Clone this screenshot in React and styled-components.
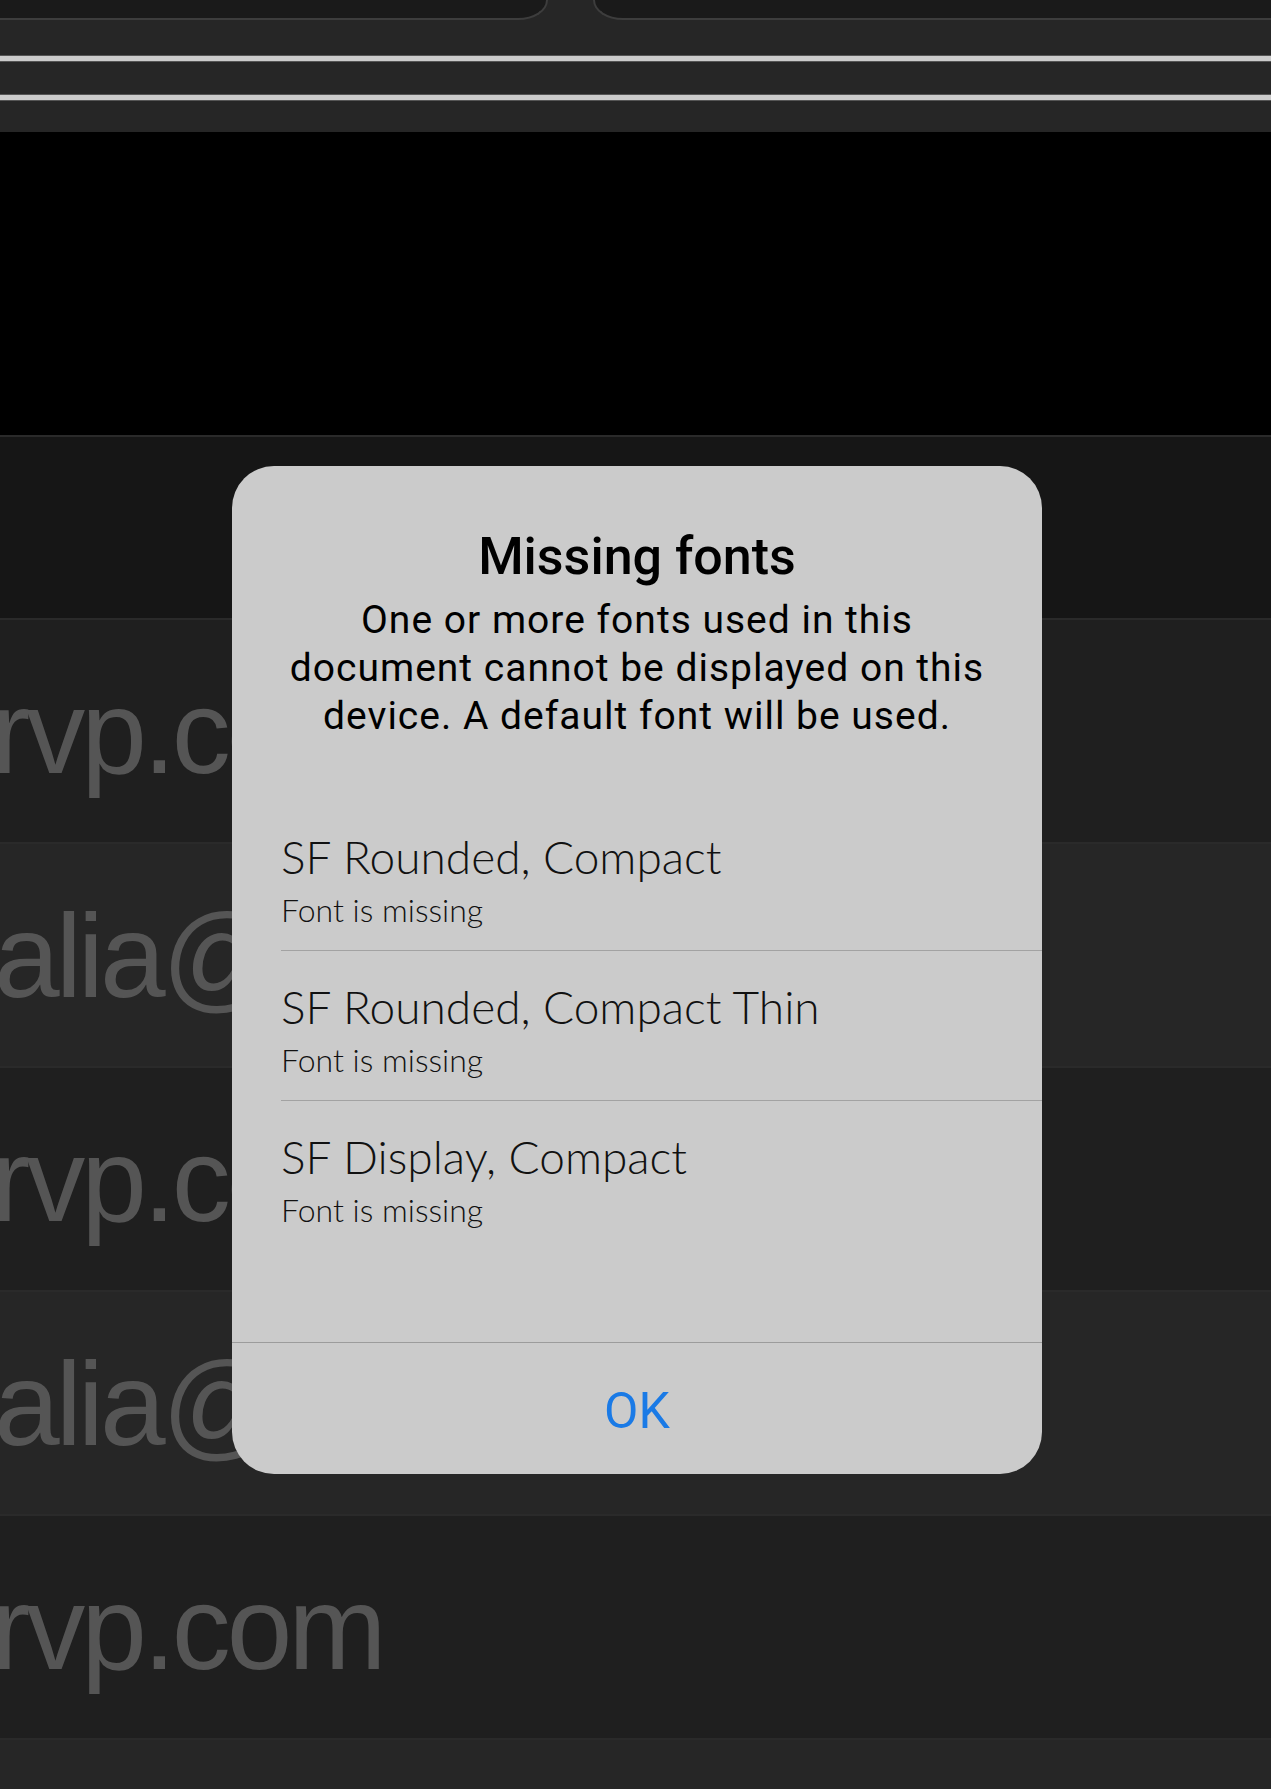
import React from "react";
import styled, { createGlobalStyle } from "styled-components";

const GlobalStyle = createGlobalStyle`
  html, body {
    margin: 0;
    padding: 0;
    background: #262626;
  }
  body {
    font-family: Roboto, "Liberation Sans", Arial, sans-serif;
    -webkit-font-smoothing: antialiased;
  }
  * { box-sizing: border-box; }
`;

const Page = styled.div`
  position: relative;
  width: 1271px;
  height: 1789px;
  overflow: hidden;
  background: #262626;
`;

const Header = styled.header`
  display: flex;
  flex-direction: column;
  padding-bottom: 31px;
  background: #262626;
`;

const TabBar = styled.div`
  display: flex;
  gap: 45px;
  height: 20px;
`;

const Tab = styled.div`
  height: 20px;
  background: #1a1a1a;
  border-bottom: 2px solid #3d3d3d;
  ${(p) =>
    p.$side === "left"
      ? `width: 548px; border-right: 2px solid #3d3d3d; border-bottom-right-radius: 30px 20px;`
      : `flex: 1; border-left: 2px solid #3d3d3d; border-bottom-left-radius: 30px 20px;`}
`;

const Rail = styled.div`
  height: 7px;
  margin-top: ${(p) => p.$top}px;
  background: #cbcbcb;
  border-top: 1px solid #555555;
  border-bottom: 1px solid #555555;
`;

const Canvas = styled.div`
  height: 303px;
  background: #000000;
`;

const Row = styled.div`
  height: ${(p) => p.$h}px;
  background: ${(p) => p.$tone};
  border-top: 2px solid #2a2a2a;
  overflow: hidden;
  padding-top: 53px;
  white-space: nowrap;
`;

const RowText = styled.div`
  font-family: "Liberation Sans", Arial, sans-serif;
  font-size: 118px;
  line-height: 1;
  letter-spacing: -4px;
  color: #555555;
  margin-left: ${(p) => p.$shift}px;
`;

const Dialog = styled.div`
  position: absolute;
  top: 466px;
  left: 232px;
  width: 810px;
  height: 1008px;
  border-radius: 42px;
  background: #cbcbcb;
  display: flex;
  flex-direction: column;
  overflow: hidden;
`;

const Title = styled.h2`
  margin: 61px 0 0;
  font-family: Roboto, "Liberation Sans", sans-serif;
  font-weight: 500;
  font-size: 52px;
  line-height: 60px;
  text-align: center;
  color: #000;
`;

const Message = styled.p`
  margin: 9px 0 0;
  font-family: Roboto, "Liberation Sans", sans-serif;
  font-weight: 400;
  font-size: 39px;
  letter-spacing: 1px;
  line-height: 48px;
  text-align: center;
  color: #000;
`;

const FontList = styled.ul`
  list-style: none;
  margin: 61px 0 0 49px;
  padding: 0;
`;

const FontItem = styled.li`
  padding: 29px 0 20px;
  border-bottom: ${(p) => (p.$last ? "none" : "1px solid #a2a2a2")};
  display: flex;
  flex-direction: column;
  gap: 6px;
`;

const FontName = styled.span`
  font-family: Lato, "Open Sans", sans-serif;
  font-weight: 300;
  font-size: 46px;
  line-height: 54px;
  color: #111;
`;

const FontStatus = styled.span`
  font-family: Lato, "Open Sans", sans-serif;
  font-weight: 300;
  font-size: 32px;
  line-height: 40px;
  color: #111;
`;

const Spacer = styled.div`
  flex: 1;
`;

const Footer = styled.div`
  height: 132px;
  border-top: 1px solid #9c9c9c;
  display: flex;
  align-items: center;
  justify-content: center;
  padding-top: 5px;
`;

const OkButton = styled.button`
  border: none;
  background: transparent;
  padding: 0;
  font-family: Roboto, "Liberation Sans", sans-serif;
  font-weight: 400;
  font-size: 50px;
  line-height: 1;
  color: #1a7ae6;
  cursor: pointer;
`;

const rows = [
  { h: 183, tone: "#161616", text: "", shift: 0 },
  { h: 224, tone: "#1f1f1f", text: "rvp.com", shift: -9 },
  { h: 224, tone: "#262626", text: "alia@rvp.com", shift: -6 },
  { h: 224, tone: "#1f1f1f", text: "rvp.com", shift: -9 },
  { h: 224, tone: "#262626", text: "alia@rvp.com", shift: -6 },
  { h: 224, tone: "#1f1f1f", text: "rvp.com", shift: -9 },
  { h: 260, tone: "#262626", text: "", shift: 0 },
];

const fonts = [
  "SF Rounded, Compact",
  "SF Rounded, Compact Thin",
  "SF Display, Compact",
];

export default function App() {
  return (
    <>
      <GlobalStyle />
      <Page>
        <Header>
          <TabBar>
            <Tab $side="left" />
            <Tab $side="right" />
          </TabBar>
          <Rail $top={35} />
          <Rail $top={32} />
        </Header>
        <Canvas />
        {rows.map((r, i) => (
          <Row key={i} $h={r.h} $tone={r.tone}>
            {r.text && <RowText $shift={r.shift}>{r.text}</RowText>}
          </Row>
        ))}

        <Dialog role="alertdialog">
          <Title>Missing fonts</Title>
          <Message>
            One or more fonts used in this
            <br />
            document cannot be displayed on this
            <br />
            device. A default font will be used.
          </Message>
          <FontList>
            {fonts.map((f, i) => (
              <FontItem key={f} $last={i === fonts.length - 1}>
                <FontName>{f}</FontName>
                <FontStatus>Font is missing</FontStatus>
              </FontItem>
            ))}
          </FontList>
          <Spacer />
          <Footer>
            <OkButton>OK</OkButton>
          </Footer>
        </Dialog>
      </Page>
    </>
  );
}
